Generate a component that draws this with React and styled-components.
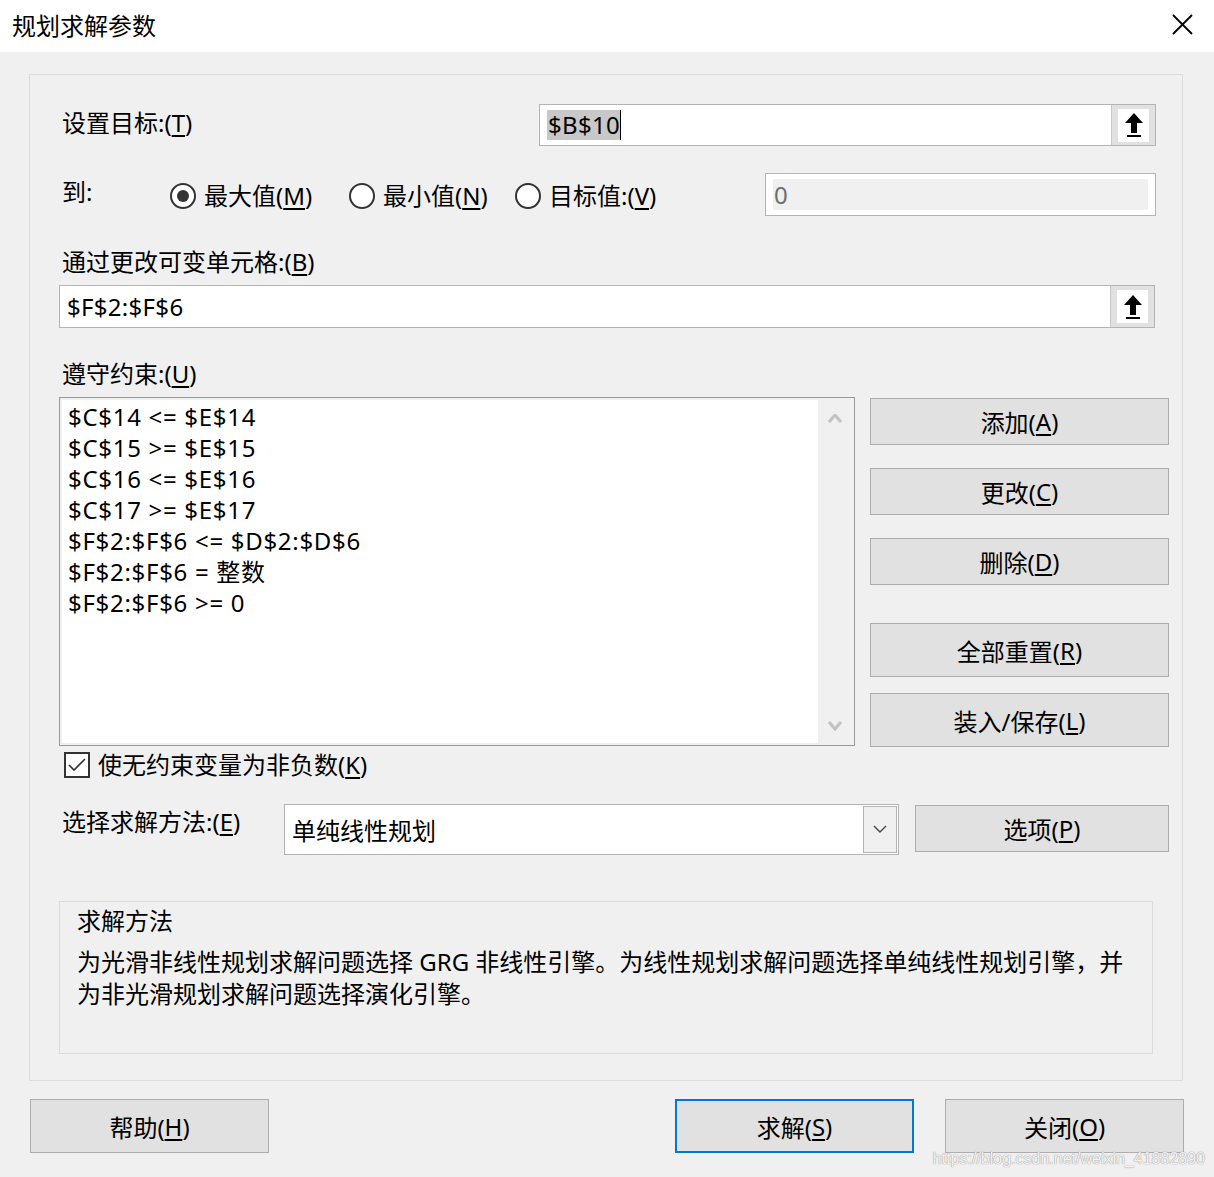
import React from 'react';
import styled, { createGlobalStyle } from 'styled-components';

const GlobalStyle = createGlobalStyle`
  html, body {
    margin: 0;
    padding: 0;
    background: #f0f0f0;
  }
  body {
    font-family: "Noto Sans", "Noto Sans CJK SC", sans-serif;
    color: #000;
  }
  * {
    box-sizing: border-box;
  }
`;

const Window = styled.div`
  position: relative;
  width: 1214px;
  height: 1177px;
  background: #f0f0f0;
  overflow: hidden;
  display: flex;
  flex-direction: column;
`;

const TitleBar = styled.div`
  height: 52px;
  background: #ffffff;
  display: flex;
  align-items: center;
  justify-content: space-between;
  padding: 0 21px 4px 12px;
  font-size: 24px;
`;

const Body = styled.div`
  padding: 22px 31px 0 29px;
`;

const Panel = styled.div`
  height: 1007px;
  border: 1px solid #dcdcdc;
  padding: 29px 13px 0 29px;
`;

const Row = styled.div`
  display: flex;
  align-items: ${p => p.align || 'center'};
  height: ${p => (p.h ? `${p.h}px` : 'auto')};
  margin-top: ${p => p.mt || 0}px;
`;

const Label = styled.div`
  font-size: 24px;
  line-height: 30px;
  padding-left: 3px;
  width: ${p => (p.w ? `${p.w}px` : 'auto')};
  flex-shrink: 0;
  padding-top: ${p => p.pt || 0}px;
  margin-top: ${p => p.shift || 0}px;
`;

const Key = styled.u`
  text-underline-offset: 3px;
  text-decoration-thickness: 1.5px;
`;

const RefBox = styled.div`
  display: flex;
  width: ${p => p.w}px;
  height: ${p => p.h}px;
  margin-left: ${p => (p.full ? '0' : 'auto')};
  margin-right: 13px;
  background: #ffffff;
  border: 1px solid #b4b4b4;
`;

const RefText = styled.div`
  flex: 1;
  display: flex;
  align-items: center;
  padding-left: 7px;
  font-size: 24px;
  letter-spacing: 0.3px;
`;

const Selected = styled.span`
  background: #c8c8c8;
  line-height: 30px;
  border-right: 1.5px solid #000;
  padding-left: 1px;
`;

const RefButton = styled.div`
  width: 44px;
  background: #e1e1e1;
  border-left: 1px solid #c8c8c8;
  display: flex;
  align-items: center;
  justify-content: center;
`;

const RefIcon = styled.div`
  width: 31px;
  height: 33px;
  background: #ffffff;
  display: flex;
  align-items: center;
  justify-content: center;
`;

const RadioOption = styled.div`
  display: flex;
  align-items: center;
  width: ${p => (p.w ? `${p.w}px` : 'auto')};
  font-size: 24px;
  gap: 8px;
`;

const RadioCircle = styled.div`
  width: 26px;
  height: 26px;
  border-radius: 50%;
  border: 2px solid #333;
  background: #fff;
  display: flex;
  align-items: center;
  justify-content: center;
  margin-top: 3px;
  &::after {
    content: '';
    display: ${p => (p.checked ? 'block' : 'none')};
    width: 12px;
    height: 12px;
    border-radius: 50%;
    background: #333;
  }
`;

const ValueBox = styled.div`
  margin-left: auto;
  margin-right: 13px;
  width: 391px;
  height: 43px;
  border: 1px solid #b4b4b4;
  background: #fff;
  padding: 5px 7px 5px 7px;
`;

const ValueInner = styled.div`
  height: 100%;
  background: #f0f0f0;
  color: #6d6d6d;
  font-size: 24px;
  display: flex;
  align-items: center;
  padding-left: 1px;
`;

const ListBox = styled.div`
  width: 796px;
  height: 349px;
  border: 1px solid #999;
  padding: 2px;
  background: #f0f0f0;
  display: flex;
`;

const ListItems = styled.div`
  flex: 1;
  background: #fff;
  padding: 1px 0 0 6px;
`;

const ListItem = styled.div`
  font-size: 24px;
  line-height: 31px;
  letter-spacing: 0.7px;
  white-space: pre;
`;

const ScrollBar = styled.div`
  width: 34px;
  display: flex;
  flex-direction: column;
  justify-content: space-between;
  align-items: center;
  padding: 14px 0 12px;
`;

const SideButtons = styled.div`
  width: 299px;
  margin-left: 15px;
  padding-top: 1px;
  display: flex;
  flex-direction: column;
`;

const Button = styled.div`
  width: ${p => (p.w ? `${p.w}px` : '100%')};
  height: ${p => p.h}px;
  margin-top: ${p => p.mt || 0}px;
  background: #e1e1e1;
  border: ${p => (p.primary ? '2px solid #0078d7' : '1px solid #adadad')};
  display: flex;
  align-items: center;
  justify-content: center;
  font-size: 24px;
  flex-shrink: 0;
`;

const CheckBox = styled.div`
  width: 26px;
  height: 26px;
  border: 2px solid #333;
  background: #fff;
  margin-left: 5px;
  margin-right: 8px;
  display: flex;
  align-items: center;
  justify-content: center;
`;

const CheckLabel = styled.div`
  font-size: 24px;
  line-height: 30px;
`;

const Select = styled.div`
  width: 616px;
  height: 51px;
  background: #fff;
  border: 1px solid #b4b4b4;
  display: flex;
  padding: 1px;
`;

const SelectText = styled.div`
  flex: 1;
  font-size: 24px;
  display: flex;
  align-items: center;
  padding-left: 6px;
`;

const SelectArrow = styled.div`
  width: 34px;
  background: #f0f0f0;
  border: 1px solid #b4b4b4;
  display: flex;
  align-items: center;
  justify-content: center;
`;

const GroupBox = styled.div`
  width: 1094px;
  height: 153px;
  margin-top: 46px;
  border: 1px solid #dcdcdc;
  padding: 3px 17px 0;
`;

const GroupTitle = styled.div`
  font-size: 24px;
  line-height: 32px;
  margin-bottom: 9px;
`;

const GroupText = styled.div`
  font-size: 24px;
  line-height: 32px;
  white-space: nowrap;
`;

const Footer = styled.div`
  display: flex;
  padding: 18px 30px 0 30px;
  gap: 31px;
`;

const Spacer = styled.div`
  flex: 1;
`;

const Watermark = styled.div`
  position: absolute;
  right: 9px;
  bottom: 9px;
  font-family: "Liberation Sans", Arial, sans-serif;
  font-size: 16px;
  color: rgba(255, 255, 255, 0.9);
  text-shadow: 0 0 1px #9a9a9a, 0 0 1px #9a9a9a;
`;

const UpArrow = () => (
  <svg width="20" height="26" viewBox="0 0 20 26">
    <path d="M10 1 L19 11 L13 11 L13 21 L7 21 L7 11 L1 11 Z" fill="#000" />
    <rect x="3" y="23" width="14" height="2" fill="#000" />
  </svg>
);

const Chevron = ({ up, color = '#c2c2c2', w = 14, h = 8, sw = 3 }) => (
  <svg width={w} height={h + 2} viewBox={`0 0 ${w} ${h + 2}`}>
    <polyline
      points={up ? `1,${h} ${w / 2},1 ${w - 1},${h}` : `1,1 ${w / 2},${h} ${w - 1},1`}
      fill="none"
      stroke={color}
      strokeWidth={sw}
    />
  </svg>
);

const constraints = [
  '$C$14 <= $E$14',
  '$C$15 >= $E$15',
  '$C$16 <= $E$16',
  '$C$17 >= $E$17',
  '$F$2:$F$6 <= $D$2:$D$6',
  '$F$2:$F$6 = 整数',
  '$F$2:$F$6 >= 0',
];

export default function App() {
  return (
    <Window>
      <GlobalStyle />
      <TitleBar>
        <span>规划求解参数</span>
        <svg width="21" height="21" viewBox="0 0 21 21">
          <path d="M1 1 L20 20 M20 1 L1 20" stroke="#000" strokeWidth="1.8" />
        </svg>
      </TitleBar>

      <Body>
        <Panel>
          <Row h={42}>
            <Label shift={-4}>设置目标:(<Key>T</Key>)</Label>
            <RefBox w={617} h={42}>
              <RefText>
                <Selected>$B$10</Selected>
              </RefText>
              <RefButton>
                <RefIcon><UpArrow /></RefIcon>
              </RefButton>
            </RefBox>
          </Row>

          <Row h={43} mt={27}>
            <Label w={111} shift={-5}>到:</Label>
            <RadioOption w={179}>
              <RadioCircle checked />
              <span>最大值(<Key>M</Key>)</span>
            </RadioOption>
            <RadioOption w={166}>
              <RadioCircle />
              <span>最小值(<Key>N</Key>)</span>
            </RadioOption>
            <RadioOption>
              <RadioCircle />
              <span>目标值:(<Key>V</Key>)</span>
            </RadioOption>
            <ValueBox>
              <ValueInner>0</ValueInner>
            </ValueBox>
          </Row>

          <Row mt={31}>
            <Label>通过更改可变单元格:(<Key>B</Key>)</Label>
          </Row>
          <Row mt={8} h={43}>
            <RefBox w={1096} h={43} full>
              <RefText>$F$2:$F$6</RefText>
              <RefButton>
                <RefIcon><UpArrow /></RefIcon>
              </RefButton>
            </RefBox>
          </Row>

          <Row mt={31}>
            <Label>遵守约束:(<Key>U</Key>)</Label>
          </Row>
          <Row mt={8} align="flex-start">
            <ListBox>
              <ListItems>
                {constraints.map(c => (
                  <ListItem key={c}>{c}</ListItem>
                ))}
              </ListItems>
              <ScrollBar>
                <Chevron up />
                <Chevron />
              </ScrollBar>
            </ListBox>
            <SideButtons>
              <Button h={47}>添加(<Key>A</Key>)</Button>
              <Button h={47} mt={23}>更改(<Key>C</Key>)</Button>
              <Button h={47} mt={23}>删除(<Key>D</Key>)</Button>
              <Button h={54} mt={38}>全部重置(<Key>R</Key>)</Button>
              <Button h={54} mt={16}>装入/保存(<Key>L</Key>)</Button>
            </SideButtons>
          </Row>

          <Row mt={3} h={30}>
            <CheckBox>
              <svg width="20" height="16" viewBox="0 0 20 16">
                <polyline points="2,8 7,13 18,2" fill="none" stroke="#333" strokeWidth="1.6" />
              </svg>
            </CheckBox>
            <CheckLabel>使无约束变量为非负数(<Key>K</Key>)</CheckLabel>
          </Row>

          <Row mt={24} align="flex-start">
            <Label w={225} pt={3}>选择求解方法:(<Key>E</Key>)</Label>
            <Select>
              <SelectText>单纯线性规划</SelectText>
              <SelectArrow>
                <Chevron color="#444" w={14} h={7} sw={1.4} />
              </SelectArrow>
            </Select>
            <Button w={254} h={47} style={{ marginLeft: 16, marginTop: 1 }}>
              选项(<Key>P</Key>)
            </Button>
          </Row>

          <GroupBox>
            <GroupTitle>求解方法</GroupTitle>
            <GroupText>为光滑非线性规划求解问题选择 GRG 非线性引擎。为线性规划求解问题选择单纯线性规划引擎，并</GroupText>
            <GroupText>为非光滑规划求解问题选择演化引擎。</GroupText>
          </GroupBox>
        </Panel>
      </Body>

      <Footer>
        <Button w={239} h={54}>帮助(<Key>H</Key>)</Button>
        <Spacer />
        <Button w={239} h={54} primary>求解(<Key>S</Key>)</Button>
        <Button w={239} h={54}>关闭(<Key>O</Key>)</Button>
      </Footer>

      <Watermark>https://blog.csdn.net/weixin_41882890</Watermark>
    </Window>
  );
}
